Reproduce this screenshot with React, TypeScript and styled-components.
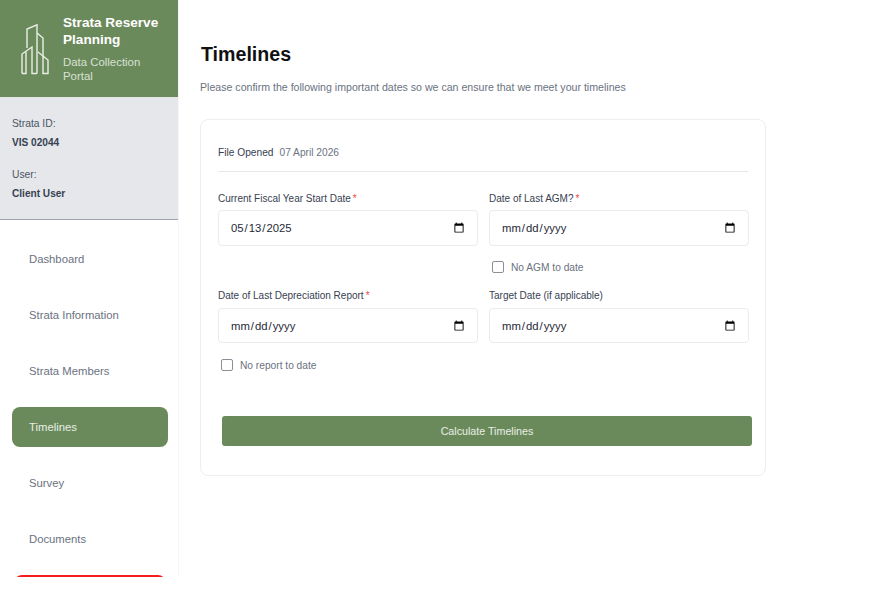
import React from 'react';
import styled, { createGlobalStyle } from 'styled-components';

const GlobalStyle = createGlobalStyle`
  html, body {
    margin: 0;
    padding: 0;
    background: #fff;
    font-family: "Liberation Sans", Arial, sans-serif;
  }
`;

const Page = styled.div`
  display: flex;
  align-items: flex-start;
  width: 882px;
  height: 590px;
  overflow: hidden;
`;

const Sidebar = styled.aside`
  box-sizing: border-box;
  width: 179px;
  height: 577px;
  flex-shrink: 0;
  overflow: hidden;
  border-right: 1px solid #f5f6f7;
`;

const Brand = styled.div`
  display: flex;
  height: 97px;
  box-sizing: border-box;
  padding: 14px 12px 0 21px;
  gap: 14px;
  background: #6b8a5c;
`;

const BrandText = styled.div`
  display: flex;
  flex-direction: column;
`;

const BrandTitle = styled.div`
  color: #fff;
  font-size: 13.6px;
  font-weight: 700;
  line-height: 17px;
  margin-bottom: 7px;
`;

const BrandSub = styled.div`
  color: #d9e1d4;
  font-size: 11.4px;
  line-height: 14px;
`;

const Info = styled.div`
  height: 123px;
  box-sizing: border-box;
  padding: 20px 12px 0;
  background: #e5e7eb;
  border-bottom: 1px solid #9ca3af;
`;

const InfoLabel = styled.div<{ $spaced?: boolean }>`
  color: #4b5563;
  font-size: 10.3px;
  line-height: 14px;
  margin-top: ${p => (p.$spaced ? '17.5px' : '0')};
`;

const InfoValue = styled.div`
  color: #374151;
  font-size: 10.1px;
  font-weight: 700;
  line-height: 14px;
  margin-top: 5.4px;
`;

const Nav = styled.nav`
  display: flex;
  flex-direction: column;
  gap: 16px;
  padding: 19px 10px 0 12px;
`;

const NavItem = styled.a<{ $active?: boolean }>`
  display: flex;
  align-items: center;
  flex-shrink: 0;
  height: 40px;
  padding-left: 17px;
  border-radius: 8px;
  font-size: 11.3px;
  color: ${p => (p.$active ? '#e9eee5' : '#6b7280')};
  background: ${p => (p.$active ? '#6b8a5c' : 'transparent')};
`;

const LogoutItem = styled.div`
  height: 40px;
  margin: 0 2px;
  flex-shrink: 0;
  border-radius: 8px;
  background: #f81c1c;
`;

const Main = styled.main`
  width: 566px;
  margin-left: 21px;
  padding-top: 42px;
`;

const Title = styled.h1`
  margin: 0 0 0 1px;
  color: #111;
  font-size: 19.6px;
  font-weight: 700;
  line-height: 24px;
`;

const Subtitle = styled.p`
  margin: 15px 0 0;
  color: #6b7280;
  font-size: 10.6px;
  line-height: 12px;
`;

const Card = styled.section`
  box-sizing: border-box;
  height: 357px;
  margin-top: 26px;
  padding: 25px 17px 0;
  border: 1px solid #eceef1;
  border-radius: 8px;
  background: #fff;
`;

const FileRow = styled.div`
  display: flex;
  gap: 6px;
  height: 26px;
  border-bottom: 1px solid #e5e7eb;
  font-size: 10.2px;
  line-height: 16px;
`;

const FileLabel = styled.span`
  color: #374151;
`;

const FileValue = styled.span`
  color: #6b7280;
`;

const FormGrid = styled.div`
  display: grid;
  grid-template-columns: 260px 260px;
  column-gap: 11px;
  row-gap: 15px;
  margin-top: 20px;
`;

const Field = styled.div`
  display: flex;
  flex-direction: column;
`;

const Label = styled.label<{ $gap?: number }>`
  color: #374151;
  font-size: 10px;
  line-height: 14px;
  margin-bottom: ${p => p.$gap ?? 4}px;
`;

const Required = styled.span`
  color: #ef4444;
  margin-left: 2px;
`;

const DateInput = styled.input<{ $h?: number }>`
  box-sizing: border-box;
  width: 260px;
  height: ${p => p.$h ?? 36}px;
  padding: 0 12px 0 11px;
  border: 1px solid #e9ebee;
  border-radius: 4px;
  background: #fff;
  color: #1f2937;
  font-family: "Liberation Sans", Arial, sans-serif;
  font-size: 11.3px;

  &::-webkit-calendar-picker-indicator {
    width: 12px;
    height: 12px;
    margin: 0;
    padding: 0;
  }
`;

const CheckRow = styled.label<{ $mt?: number }>`
  display: flex;
  align-items: center;
  gap: 7px;
  height: 14px;
  margin: ${p => p.$mt ?? 14}px 0 0 3px;
  color: #6b7280;
  font-size: 10.2px;
`;

const Check = styled.input`
  box-sizing: border-box;
  appearance: none;
  width: 12px;
  height: 12px;
  margin: 0;
  border: 1px solid #8a8f98;
  border-radius: 2px;
  background: #fff;
`;

const SubmitButton = styled.button`
  display: block;
  width: 530px;
  height: 30px;
  margin: 44px 0 0 4px;
  padding: 0;
  border: 0;
  border-radius: 3px;
  background: #6b8a5c;
  color: #e9eee5;
  font-family: "Liberation Sans", Arial, sans-serif;
  font-size: 10.7px;
`;

const LogoSvg = styled.svg`
  flex-shrink: 0;
  margin-top: 10px;
`;

const BuildingLogo = () => (
  <LogoSvg width="28" height="51" viewBox="0 0 28 51" fill="none" stroke="#e9eee5" strokeWidth="1.4">
    <path d="M6 24 V5 L16 0.8 V49.5" />
    <path d="M16 9 L22 14 V33" />
    <path d="M1 49.5 V30 L11 23 V49.5 H16" />
    <path d="M1 49.5 H5 V28" />
    <path d="M17 28 L27 36 V49.5 H22 V33" />
  </LogoSvg>
);

const navItems = ['Dashboard', 'Strata Information', 'Strata Members', 'Timelines', 'Survey', 'Documents'];

export default function App() {
  return (
    <Page>
      <GlobalStyle />
      <Sidebar>
        <Brand>
          <BuildingLogo />
          <BrandText>
            <BrandTitle>Strata Reserve Planning</BrandTitle>
            <BrandSub>Data Collection Portal</BrandSub>
          </BrandText>
        </Brand>
        <Info>
          <InfoLabel>Strata ID:</InfoLabel>
          <InfoValue>VIS 02044</InfoValue>
          <InfoLabel $spaced>User:</InfoLabel>
          <InfoValue>Client User</InfoValue>
        </Info>
        <Nav>
          {navItems.map(item => (
            <NavItem key={item} $active={item === 'Timelines'}>{item}</NavItem>
          ))}
          <LogoutItem />
        </Nav>
      </Sidebar>
      <Main>
        <Title>Timelines</Title>
        <Subtitle>Please confirm the following important dates so we can ensure that we meet your timelines</Subtitle>
        <Card>
          <FileRow>
            <FileLabel>File Opened</FileLabel>
            <FileValue>07 April 2026</FileValue>
          </FileRow>
          <FormGrid>
            <Field>
              <Label>Current Fiscal Year Start Date<Required>*</Required></Label>
              <DateInput type="date" defaultValue="2025-05-13" />
            </Field>
            <Field>
              <Label>Date of Last AGM?<Required>*</Required></Label>
              <DateInput type="date" />
              <CheckRow><Check type="checkbox" />No AGM to date</CheckRow>
            </Field>
            <Field>
              <Label $gap={5}>Date of Last Depreciation Report<Required>*</Required></Label>
              <DateInput type="date" $h={35} />
              <CheckRow $mt={15}><Check type="checkbox" />No report to date</CheckRow>
            </Field>
            <Field>
              <Label $gap={5}>Target Date (if applicable)</Label>
              <DateInput type="date" $h={35} />
            </Field>
          </FormGrid>
          <SubmitButton type="button">Calculate Timelines</SubmitButton>
        </Card>
      </Main>
    </Page>
  );
}
